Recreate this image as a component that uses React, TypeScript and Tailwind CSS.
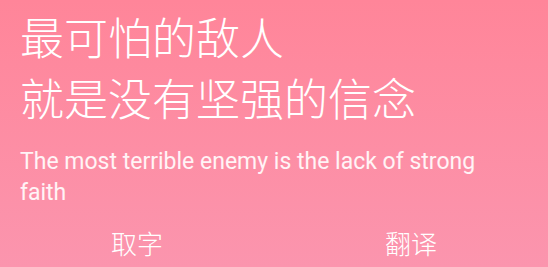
import React from "react";

export default function App() {
  return (
    <div className="w-[548px] h-[267px] overflow-hidden bg-gradient-to-b from-[#ff8599] to-[#fb95ae] flex flex-col">
      <div className="pl-[20px] pt-[6px] text-white text-[44px] leading-[61px] font-light" style={{ fontFamily: '"Noto Sans CJK SC", sans-serif' }}>
        <div>最可怕的敌人</div>
        <div>就是没有坚强的信念</div>
      </div>
      <div className="pl-[20px] pr-[50px] mt-[18px] text-[23px] leading-[31px] text-white/90" style={{ fontFamily: 'Roboto, "Noto Sans CJK SC", sans-serif' }}>
        The most terrible enemy is the lack of strong faith
      </div>
      <div className="flex mt-[15px] text-white text-[26px] font-light" style={{ fontFamily: '"Noto Sans CJK SC", sans-serif' }}>
        <div className="flex-1 text-center">取字</div>
        <div className="flex-1 text-center">翻译</div>
      </div>
    </div>
  );
}
